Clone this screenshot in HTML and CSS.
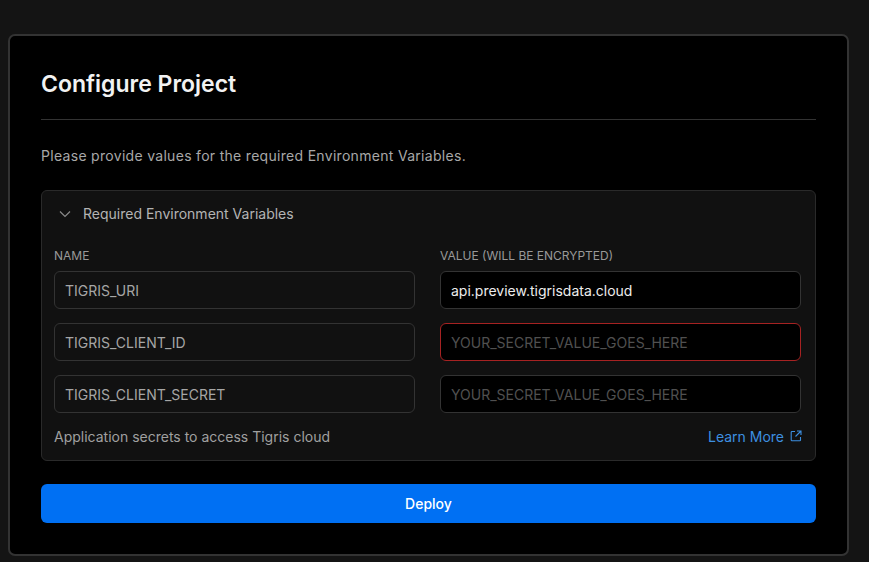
FILE: index.html
```html
<!DOCTYPE html>
<html lang="en">
<head>
<meta charset="utf-8">
<title>Configure Project</title>
<link rel="stylesheet" href="styles.css">
</head>
<body>
<div class="card">
  <h1 class="title">Configure Project</h1>
  <hr class="divider">
  <p class="desc">Please provide values for the required Environment Variables.</p>
  <div class="panel">
    <div class="panel-head">
      <svg class="chev" width="14" height="14" viewBox="0 0 14 14"><path d="M2 4.5 L7 9.5 L12 4.5" fill="none" stroke="#8a8a8a" stroke-width="1.2"/></svg>
      <span>Required Environment Variables</span>
    </div>
    <div class="grid">
      <div class="label">Name</div>
      <div class="label">Value (will be encrypted)</div>
      <div class="input name">TIGRIS_URI</div>
      <div class="input value filled">api.preview.tigrisdata.cloud</div>
      <div class="input name">TIGRIS_CLIENT_ID</div>
      <div class="input value error">YOUR_SECRET_VALUE_GOES_HERE</div>
      <div class="input name">TIGRIS_CLIENT_SECRET</div>
      <div class="input value">YOUR_SECRET_VALUE_GOES_HERE</div>
    </div>
    <div class="panel-foot">
      <span>Application secrets to access Tigris cloud</span>
      <a class="learn" href="#">Learn More
        <svg width="12" height="12" viewBox="0 0 12 12"><path d="M5 1.5 H2 a0.8 0.8 0 0 0 -0.8 0.8 V10 a0.8 0.8 0 0 0 0.8 0.8 H9.7 a0.8 0.8 0 0 0 0.8 -0.8 V7" fill="none" stroke="currentColor" stroke-width="1.1"/><path d="M7 1 H11 V5 M11 1 L5.5 6.5" fill="none" stroke="currentColor" stroke-width="1.1"/></svg>
      </a>
    </div>
  </div>
  <button class="deploy">Deploy</button>
</div>
</body>
</html>
```
FILE: styles.css
```css
* { box-sizing: border-box; }
html, body { margin: 0; }
body {
  background: #141414;
  font-family: Inter, "Noto Sans", sans-serif;
  padding: 34px 0 0 8px;
  height: 562px;
  overflow: hidden;
}
.card {
  width: 841px;
  background: #000;
  border: 2px solid #333;
  border-radius: 7px;
  padding: 34px 31px 31px 31px;
}
.title {
  margin: 0;
  font-size: 23px;
  line-height: 28px;
  font-weight: 600;
  color: #f2f2f2;
  letter-spacing: 0;
}
.divider {
  margin: 21px 0 0;
  border: 0;
  height: 1px;
  background: #333;
}
.desc {
  margin: 26px 0 0;
  font-size: 14px;
  line-height: 20px;
  color: #a8a8a8;
  letter-spacing: 0.3px;
}
.panel {
  margin-top: 24px;
  background: #111;
  border: 1px solid #2a2a2a;
  border-radius: 6px;
  padding: 0 13px 13px 12px;
}
.panel-head {
  display: flex;
  align-items: center;
  gap: 11px;
  padding: 13px 0 0 4px;
  font-size: 14px;
  line-height: 20px;
  color: #b4b4b4;
}
.chev { display: block; }
.grid {
  margin-top: 24px;
  display: grid;
  grid-template-columns: 361px 361px;
  column-gap: 25px;
  row-gap: 14px;
}
.label {
  font-size: 12px;
  line-height: 16px;
  text-transform: uppercase;
  color: #999;
  margin-bottom: -7px;
}
.input {
  height: 38px;
  border-radius: 6px;
  border: 1px solid #333;
  padding: 0 10px;
  display: flex;
  align-items: center;
  font-size: 14px;
  color: #a6a6a6;
}
.input.name { background: #111; }
.input.value { background: #000; color: #505050; }
.input.value.filled { color: #ededed; }
.input.value.error { border-color: #a62222; }
.panel-foot {
  margin-top: 14px;
  display: flex;
  justify-content: space-between;
  align-items: center;
  font-size: 14px;
  line-height: 20px;
  color: #a0a0a0;
}
.learn {
  color: #3d8fe0;
  text-decoration: none;
  display: flex;
  align-items: center;
  gap: 6px;
}
.learn svg { display: block; margin-top: -3px; }
.deploy {
  display: block;
  width: 100%;
  margin-top: 23px;
  height: 39px;
  border: 0;
  border-radius: 6px;
  background: #0070f3;
  color: #fff;
  font-family: inherit;
  font-size: 14px;
  font-weight: 500;
}
```
